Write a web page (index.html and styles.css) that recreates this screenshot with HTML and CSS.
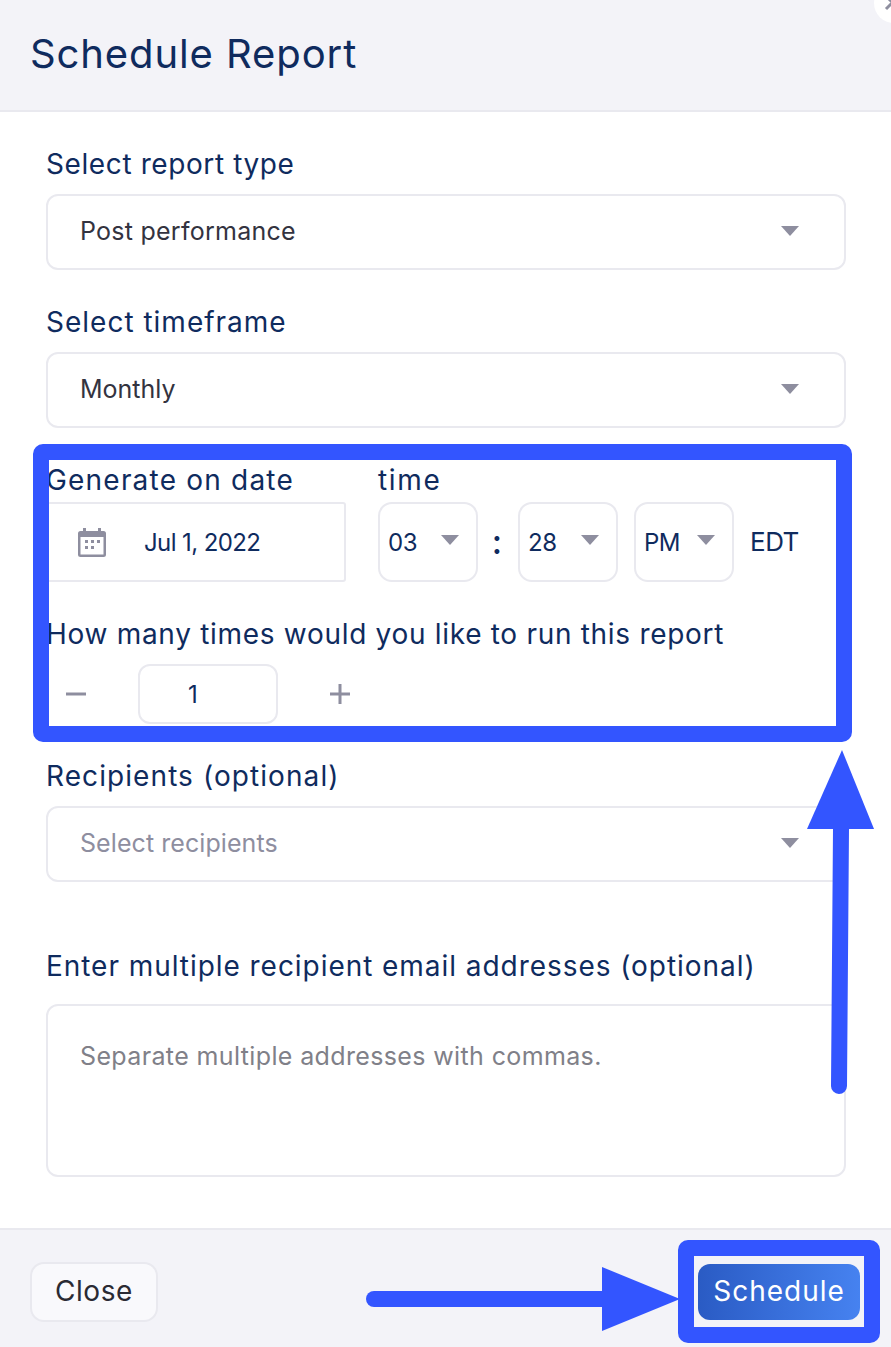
FILE: index.html
```html
<!DOCTYPE html>
<html lang="en">
<head>
<meta charset="utf-8">
<title>Schedule Report</title>
<link rel="stylesheet" href="styles.css">
</head>
<body>
<div class="modal">
  <header class="head">
    <h1 class="title">Schedule Report</h1>
    <span class="dismiss"><svg width="20" height="20" viewBox="0 0 20 20"><path d="M2 16L15 3M2 3L15 16" stroke="#8e8e9f" stroke-width="3" fill="none"/></svg></span>
  </header>
  <main class="form">
    <label class="label">Select report type</label>
    <div class="select"><span>Post performance</span><i class="caret"></i></div>
    <label class="label gap wide-1">Select timeframe</label>
    <div class="select"><span class="tight-1">Monthly</span><i class="caret"></i></div>
    <div class="when">
      <div class="col-date"><label class="label wide-2">Generate on date</label></div>
      <div class="col-time"><label class="label wide-3">time</label></div>
    </div>
    <div class="row">
      <div class="date">
        <svg class="cal" width="30" height="30" viewBox="0 0 30 30"><path fill="#8e8e9f" fill-rule="evenodd" d="M6 1h3v3h12V1h3v3h2.500A2.500 2.500 0 0 1 29 6.500v21a2.500 2.500 0 0 1-2.500 2.500h-23A2.500 2.500 0 0 1 1 27.500v-21A2.500 2.500 0 0 1 3.500 4H6zM3.500 10v17.500h23V10z"/><path fill="#8e8e9f" d="M8 13h3v3H8zM14 13h3v3h-3zM20 13h3v3h-3zM8 19h3v3H8zM14 19h3v3h-3z"/></svg>
        <span class="date-text">Jul 1, 2022</span>
      </div>
      <div class="mini"><span class="num">03</span><i class="caret"></i></div>
      <span class="colon">:</span>
      <div class="mini"><span class="num">28</span><i class="caret"></i></div>
      <div class="mini pm"><span class="num">PM</span><i class="caret"></i></div>
      <span class="zone">EDT</span>
    </div>
    <label class="label gap wide-4">How many times would you like to run this report</label>
    <div class="stepper">
      <svg class="step-icon" width="20" height="20" viewBox="0 0 20 20"><path d="M0 10h20" stroke="#8e8e9f" stroke-width="3"/></svg>
      <div class="count">1</div>
      <svg class="step-icon" width="20" height="20" viewBox="0 0 20 20"><path d="M0 10h20M10 0v20" stroke="#8e8e9f" stroke-width="3"/></svg>
    </div>
    <label class="label gap wide-5">Recipients (optional)</label>
    <div class="select"><span class="placeholder">Select recipients</span><i class="caret"></i></div>
    <label class="label gap-lg wide-6">Enter multiple recipient email addresses (optional)</label>
    <div class="area">Separate multiple addresses with commas.</div>
  </main>
  <footer class="foot">
    <button class="close">Close</button>
    <button class="schedule">Schedule</button>
  </footer>
  <svg class="notes" width="891" height="1347" viewBox="0 0 891 1347">
    <rect x="41" y="452" width="803" height="282" rx="2" fill="none" stroke="#3355ff" stroke-width="16"/>
    <rect x="686" y="1248" width="186" height="87" rx="2" fill="none" stroke="#3355ff" stroke-width="16"/>
    <path d="M841 829L839 1086" stroke="#3355ff" stroke-width="16" stroke-linecap="round" fill="none"/>
    <path d="M842 750L874 829H807Z" fill="#3355ff"/>
    <path d="M374 1299H610" stroke="#3355ff" stroke-width="16" stroke-linecap="round" fill="none"/>
    <path d="M602 1267L680 1299L602 1331Z" fill="#3355ff"/>
  </svg>
</div>
</body>
</html>
```
FILE: styles.css
```css
* { box-sizing: border-box; }
html, body { margin: 0; padding: 0; }
body { width: 891px; height: 1347px; overflow: hidden; background: #fff; font-family: "Inter", "Open Sans", sans-serif; color: #0f2b5e; }
.modal { position: relative; width: 891px; height: 1347px; display: flex; flex-direction: column; overflow: hidden; }
.head { height: 112px; flex: none; background: #f3f3f8; border-bottom: 2px solid #e9e9ef; padding: 0 30px; display: flex; align-items: center; position: relative; }
.title { margin: 0 0 2px; font-size: 40px; font-weight: 400; line-height: 48px; letter-spacing: .9px; color: #0f2b5e; }
.dismiss { position: absolute; top: -17px; right: -23px; width: 40px; height: 40px; border-radius: 50%; background: #fff; display: flex; align-items: center; justify-content: center; }
.form { flex: 1; padding: 34px 46px 0; display: flex; flex-direction: column; align-items: flex-start; }
.label { display: block; font-size: 28px; line-height: 36px; height: 36px; letter-spacing: .6px; white-space: nowrap; color: #0f2b5e; }
.wide-1 { letter-spacing: 1px; }
.wide-2 { letter-spacing: 1.2px; }
.wide-3 { letter-spacing: 1.65px; }
.wide-4 { letter-spacing: .7px; }
.wide-5 { letter-spacing: 1.08px; }
.wide-6 { letter-spacing: .95px; }
.gap { margin-top: 34px; }
.gap-lg { margin-top: 66px; }
.select { width: 800px; height: 76px; margin-top: 12px; border: 2px solid #e9e9ef; border-radius: 12px; padding: 0 45px 2px 32px; display: flex; align-items: center; justify-content: space-between; font-size: 25px; letter-spacing: .25px; color: #333340; }
.tight-1 { letter-spacing: 0; }
.placeholder { color: #8e8e9f; letter-spacing: .07px; }
.caret { display: block; flex: none; width: 0; height: 0; border-left: 9px solid transparent; border-right: 9px solid transparent; border-top: 10px solid #8e8e9f; }
.when { display: flex; margin-top: 34px; }
.col-date { width: 332px; }
.row { display: flex; align-items: center; margin-top: 4px; height: 80px; }
.date { width: 300px; height: 80px; border: 2px solid #e9e9ef; border-radius: 3px; display: flex; align-items: center; padding-left: 29px; font-size: 24px; }
.cal { flex: none; }
.date-text { margin-left: 37px; letter-spacing: -.6px; }
.mini { width: 100px; height: 80px; margin-left: 32px; border: 2px solid #e9e9ef; border-radius: 14px; display: flex; align-items: center; justify-content: space-between; padding: 0 17px 0 9px; font-size: 24px; }
.num { letter-spacing: -.5px; margin-left: -1px; }
.mini .caret { margin-bottom: 4px; }
.colon { width: 38px; text-align: center; font-size: 34px; font-weight: 500; margin: -2px 2px 0 0; }
.colon + .mini { margin-left: 0; }
.mini.pm { margin-left: 16px; }
.zone { margin: -2px 0 0 16px; font-size: 26px; letter-spacing: -.5px; }
.stepper { display: flex; align-items: center; height: 60px; margin-top: 12px; padding-left: 20px; }
.step-icon { flex: none; }
.count { width: 140px; height: 60px; margin: 0 52px; border: 2px solid #e9e9ef; border-radius: 12px; display: flex; align-items: center; justify-content: center; padding-right: 30px; font-size: 24px; }
.area { width: 800px; height: 173px; margin-top: 20px; border: 2px solid #e9e9ef; border-radius: 12px; padding: 32px; font-size: 25px; letter-spacing: .37px; line-height: 36px; color: #808088; }
.foot { flex: none; height: 119px; background: #f3f3f8; border-top: 2px solid #e9e9ef; display: flex; align-items: flex-start; justify-content: space-between; padding: 32px 31px 0 30px; }
.close { width: 128px; height: 60px; background: #f9f9fc; border: 2px solid #e9e9ef; border-radius: 14px; font: 400 28px "Inter", sans-serif; letter-spacing: .6px; color: #2a2a33; padding: 0 0 2px; }
.schedule { width: 162px; height: 56px; margin-top: 2px; background: linear-gradient(90deg, #2a5bc4, #4682f0); border: 0; border-radius: 12px; font: 400 28px "Inter", sans-serif; letter-spacing: 1px; color: #fff; padding: 0 0 2px; }
.notes { position: absolute; left: 0; top: 0; pointer-events: none; }
```
